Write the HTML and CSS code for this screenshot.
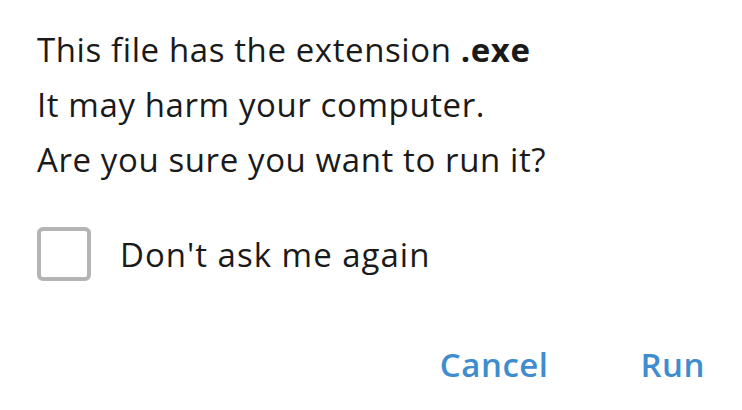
FILE: index.html
```html
<!DOCTYPE html>
<html>
<head>
<meta charset="utf-8">
<link rel="stylesheet" href="styles.css">
</head>
<body>
<div class="dialog">
  <div class="message">
    <p>This file has the extension <b>.exe</b></p>
    <p>It may harm your computer.</p>
    <p>Are you sure you want to run it?</p>
  </div>
  <label class="check">
    <span class="box"></span>
    <span class="label">Don't ask me again</span>
  </label>
  <div class="buttons">
    <button class="btn">Cancel</button>
    <button class="btn">Run</button>
  </div>
</div>
</body>
</html>
```
FILE: styles.css
```css
html, body {
  margin: 0;
  padding: 0;
  background: #ffffff;
}
body {
  font-family: "Open Sans", "Noto Sans", sans-serif;
  color: #1a1a1a;
  width: 742px;
  height: 410px;
  overflow: hidden;
}
.dialog {
  padding: 22px 0 0 37px;
}
.message p {
  margin: 0;
  font-size: 33px;
  letter-spacing: 0.6px;
  line-height: 55px;
  height: 55px;
}
.message b {
  font-weight: 700;
}
.check {
  display: flex;
  align-items: center;
  margin-top: 40px;
}
.box {
  width: 46px;
  height: 46px;
  border: 4px solid #b4b4b4;
  border-radius: 6px;
  box-sizing: content-box;
}
.label {
  margin-left: 29px;
  font-size: 33px;
  letter-spacing: 1px;
}
.buttons {
  display: flex;
  justify-content: flex-end;
  gap: 92px;
  margin-top: 64px;
  padding-right: 37px;
}
.btn {
  background: none;
  border: none;
  padding: 0;
  font-family: inherit;
  font-size: 33px;
  letter-spacing: 0.5px;
  font-weight: 600;
  color: #3f8dcf;
  line-height: 40px;
}
```
